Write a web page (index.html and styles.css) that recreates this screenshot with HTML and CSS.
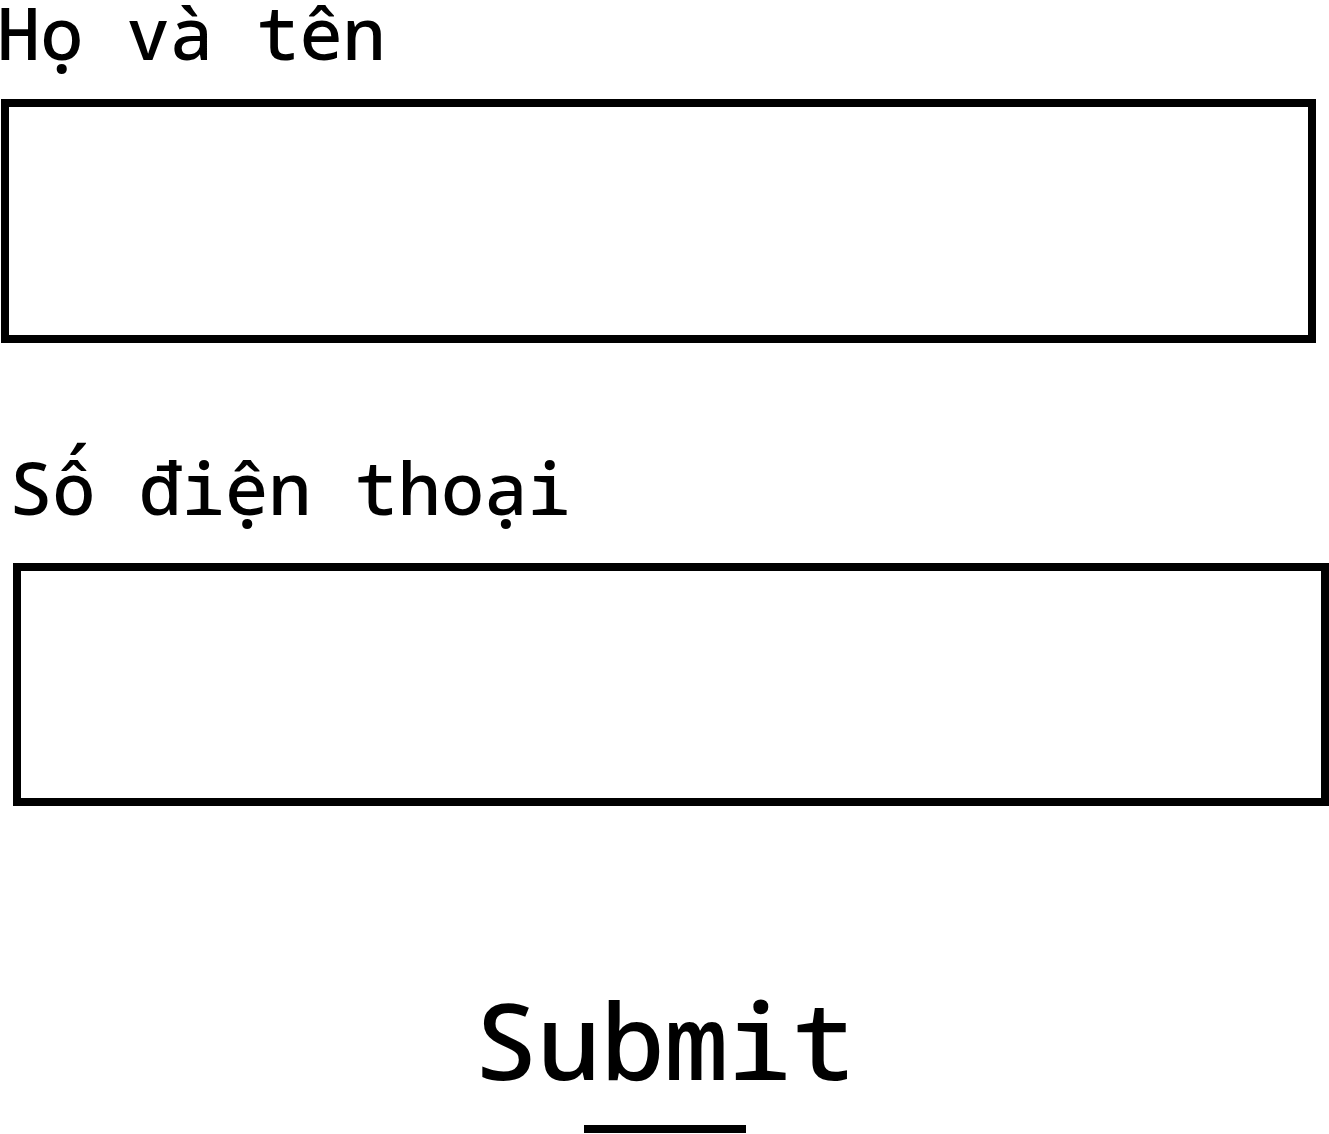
FILE: index.html
```html
<!DOCTYPE html>
<html lang="vi">
<head>
<meta charset="utf-8">
<title>Form</title>
<link rel="stylesheet" href="styles.css">
</head>
<body>
<form class="form">
  <div class="field field-name">
    <label class="label" for="name">Họ và tên</label>
    <input class="input" id="name" type="text">
  </div>
  <div class="field field-phone">
    <label class="label" for="phone">Số điện thoại</label>
    <input class="input" id="phone" type="text">
  </div>
  <div class="actions">
    <button class="submit" type="button">Submit</button>
    <span class="submit-bar"></span>
  </div>
</form>
</body>
</html>
```
FILE: styles.css
```css
html, body {
  margin: 0;
  padding: 0;
  background: #fff;
  overflow: hidden;
}
.form {
  display: flex;
  flex-direction: column;
  font-family: "Noto Sans Mono", "DejaVu Sans Mono", monospace;
  font-weight: 500;
  color: #000;
}
.field {
  display: flex;
  flex-direction: column;
  align-items: flex-start;
}
.label {
  font-size: 72px;
  line-height: 64px;
}
.input {
  box-sizing: border-box;
  border: 8px solid #000;
  border-radius: 0;
  background: #fff;
  outline: none;
  padding: 0;
  height: 244px;
}
.field-name .label {
  margin-left: -3px;
}
.field-name .input {
  margin: 35px 0 0 1px;
  width: 1315px;
}
.field-phone {
  margin-top: 112px;
}
.field-phone .label {
  margin-left: 9px;
}
.field-phone .input {
  margin: 44px 0 0 13px;
  width: 1316px;
  height: 243px;
}
.actions {
  margin-top: 179px;
  display: flex;
  flex-direction: column;
  align-items: center;
}
.submit {
  font-family: "Noto Sans Mono", "DejaVu Sans Mono", monospace;
  font-weight: 500;
  font-size: 106px;
  line-height: 108px;
  background: none;
  border: 0;
  padding: 0;
  color: #000;
}
.submit-bar {
  display: block;
  width: 162px;
  height: 8px;
  background: #000;
  margin-top: 32px;
}
```
